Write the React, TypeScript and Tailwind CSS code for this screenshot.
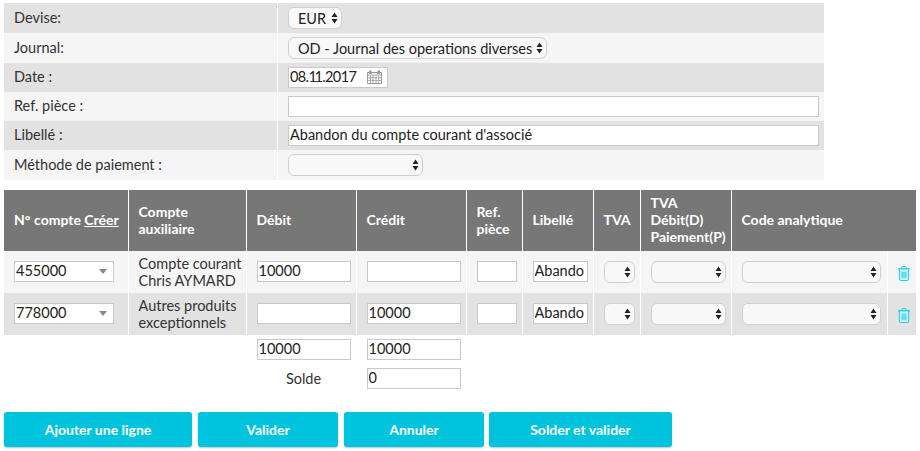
import React from 'react';

const inputBase = 'block h-[21px] border border-[#c9c9c9] bg-white pb-[2px] pl-[1px] text-[14.5px] leading-none text-[#222] outline-none';
const inputCls = `${inputBase} pr-[1px]`;

function Arrows() {
  return (
    <svg className="pointer-events-none absolute top-1/2 right-[4px] -translate-y-1/2" width="7" height="12" viewBox="0 0 7 12">
      <path d="M3.5 0.5L6.5 5H0.5Z M3.5 11.5L0.5 7H6.5Z" fill="#222" />
    </svg>
  );
}

function NativeSelect({ value, width, height = 'h-[22px]' }: { value?: string; width: string; height?: string }) {
  return (
    <div className={`relative ${width} ${height}`}>
      <select
        value={value ?? ''}
        onChange={() => {}}
        className={`block w-full ${height} appearance-none rounded-[6px] border border-[#cfcfcf] bg-[#f8f8f8] pb-[1px] pl-[9px] text-[14.5px] text-[#222] outline-none`}
      >
        <option value={value ?? ''}>{value ?? ''}</option>
      </select>
      <Arrows />
    </div>
  );
}

function AccountSelect({ value }: { value: string }) {
  return (
    <div className="relative h-[21px] w-[100px]">
      <input value={value} readOnly className={`${inputCls} w-full`} />
      <svg className="absolute top-[8px] right-[7px]" width="8" height="5" viewBox="0 0 8 5">
        <path d="M0 0H8L4 5Z" fill="#888" />
      </svg>
    </div>
  );
}

function TrashIcon() {
  return (
    <svg className="mt-[2px] ml-[9px]" width="14" height="15" viewBox="0 0 14 16" fill="none" stroke="#12cbe2" strokeWidth="1">
      <path d="M0.5 3H13.5 M4.5 3V1.5C4.5 0.9 5 0.5 5.5 0.5H8.5C9 0.5 9.5 0.9 9.5 1.5V3" />
      <path d="M2 3V14C2 14.9 2.6 15.5 3.5 15.5H10.5C11.4 15.5 12 14.9 12 14V3Z" fill="#c9f1f6" />
      <path d="M5 6V13 M7 6V13 M9 6V13" />
    </svg>
  );
}

function CalendarIcon() {
  return (
    <svg width="15" height="14" viewBox="0 0 15 14" fill="none" stroke="#999999" strokeWidth="1">
      <path d="M0.5 2.5H14.5V13.5H0.5Z" />
      <path d="M0.5 5H14.5 M0.5 7.8H14.5 M0.5 10.6H14.5 M3.5 5V13.5 M6 5V13.5 M9 5V13.5 M11.7 5V13.5" strokeWidth="0.8" />
      <path d="M2 0.5H4.5V4H2Z M10.5 0.5H13V4H10.5Z" fill="#999999" stroke="none" />
    </svg>
  );
}

function FormRow({ label, height, shade, children }: { label: string; height: string; shade: string; children: React.ReactNode }) {
  return (
    <div className={`grid grid-cols-[274px_1fr] ${height} ${shade}`}>
      <div className="flex items-center border-r border-white pb-[1px] pl-[10px]">{label}</div>
      <div className="flex items-center pl-[10px]">{children}</div>
    </div>
  );
}

function Header({ children, className = '' }: { children: React.ReactNode; className?: string }) {
  return <th className={`border-r border-white pb-[2px] pl-[10px] text-left align-middle text-[14px] leading-[17px] font-bold text-white ${className}`}>{children}</th>;
}

function Row({ shade, account, label, debit, credit }: { shade: string; account: string; label: React.ReactNode; debit: string; credit: string }) {
  const cell = 'border-r border-white pb-[1px] pl-[10px] align-middle';
  return (
    <tr className={`h-[42px] ${shade}`}>
      <td className={cell}><AccountSelect value={account} /></td>
      <td className={`${cell} leading-[17px] whitespace-nowrap`}>{label}</td>
      <td className={cell}><input value={debit} readOnly className={`${inputCls} w-[94px]`} /></td>
      <td className={cell}><input value={credit} readOnly className={`${inputCls} w-[94px]`} /></td>
      <td className={cell}><input readOnly className={`${inputCls} w-[40px]`} /></td>
      <td className={cell}><input value="Abandon du compte courant d'associé" readOnly className={`${inputBase} w-[55px] pr-[3px]`} /></td>
      <td className={cell}><NativeSelect width="w-[31px]" /></td>
      <td className={cell}><NativeSelect width="w-[75px]" /></td>
      <td className={cell}><NativeSelect width="w-[139px]" /></td>
      <td className="align-middle"><TrashIcon /></td>
    </tr>
  );
}

export default function App() {
  const buttonCls = 'h-[35px] rounded-[3px] bg-[#00c4de] text-[14px] font-bold text-white shadow-[0_1px_2px_rgba(0,0,0,0.25)]';
  const totalCell = 'border-r border-transparent pl-[10px] align-middle';

  return (
    <div className="h-[451px] w-[920px] overflow-hidden bg-white pt-[3px] pl-[4px] font-['Lato',sans-serif] text-[14.5px] text-[#333]">
      <div className="w-[820px]">
        <FormRow label="Devise:" height="h-[30px]" shade="bg-[#e2e2e2]">
          <NativeSelect value="EUR" width="w-[54px]" />
        </FormRow>
        <FormRow label="Journal:" height="h-[30px]" shade="bg-[#f5f5f5]">
          <NativeSelect value="OD - Journal des operations diverses" width="w-[259px]" />
        </FormRow>
        <FormRow label="Date :" height="h-[29px]" shade="bg-[#e2e2e2]">
          <div className="flex h-[21px] w-[100px] items-center justify-between border border-[#c9c9c9] bg-white pr-[5px] pb-[1px] pl-[1px] text-[#222]">
            <span className="tracking-[-0.6px]">08.<span className="tracking-[-2.5px]">1</span>1.2017</span>
            <CalendarIcon />
          </div>
        </FormRow>
        <FormRow label="Ref. pièce :" height="h-[29px]" shade="bg-[#f5f5f5]">
          <input readOnly className={`${inputCls} w-[531px]`} />
        </FormRow>
        <FormRow label="Libellé :" height="h-[29px]" shade="bg-[#e2e2e2]">
          <input value="Abandon du compte courant d'associé" readOnly className={`${inputCls} w-[531px]`} />
        </FormRow>
        <FormRow label="Méthode de paiement :" height="h-[30px]" shade="bg-[#f5f5f5]">
          <NativeSelect width="w-[135px]" />
        </FormRow>
      </div>

      <table className="mt-[10px] w-[912px] table-fixed border-collapse">
        <colgroup>
          <col className="w-[124px]" />
          <col className="w-[118px]" />
          <col className="w-[110px]" />
          <col className="w-[110px]" />
          <col className="w-[56px]" />
          <col className="w-[71px]" />
          <col className="w-[47px]" />
          <col className="w-[91px]" />
          <col className="w-[156px]" />
          <col className="w-[29px]" />
        </colgroup>
        <thead>
          <tr className="h-[61px] bg-[#777777]">
            <Header>N° compte <span className="underline">Créer</span></Header>
            <Header>Compte<br />auxiliaire</Header>
            <Header>Débit</Header>
            <Header>Crédit</Header>
            <Header>Ref.<br />pièce</Header>
            <Header>Libellé</Header>
            <Header>TVA</Header>
            <Header className="pr-0">TVA<br />Débit(D)<br />Paiement(P)</Header>
            <th colSpan={2} className="pb-[2px] pl-[10px] text-left align-middle text-[14px] font-bold text-white">Code analytique</th>
          </tr>
        </thead>
        <tbody>
          <Row shade="bg-[#f5f5f5]" account="455000" label={<>Compte courant<br />Chris AYMARD</>} debit="10000" credit="" />
          <Row shade="bg-[#e2e2e2]" account="778000" label={<>Autres produits<br />exceptionnels</>} debit="" credit="10000" />
          <tr className="h-[29px]">
            <td colSpan={2} className="border-r border-transparent" />
            <td className={totalCell}><input value="10000" readOnly className={`${inputCls} w-[94px]`} /></td>
            <td className={totalCell}><input value="10000" readOnly className={`${inputCls} w-[94px]`} /></td>
            <td colSpan={6} />
          </tr>
          <tr className="h-[29px]">
            <td colSpan={2} className="border-r border-transparent" />
            <td className={totalCell}><div className="w-[94px] text-center">Solde</div></td>
            <td className={totalCell}><input value="0" readOnly className={`${inputCls} w-[94px]`} /></td>
            <td colSpan={6} />
          </tr>
        </tbody>
      </table>

      <div className="mt-[19px] flex gap-[6px]">
        <button className={`${buttonCls} w-[188px]`}>Ajouter une ligne</button>
        <button className={`${buttonCls} w-[140px]`}>Valider</button>
        <button className={`${buttonCls} w-[140px]`}>Annuler</button>
        <button className={`${buttonCls} -ml-px w-[183px]`}>Solder et valider</button>
      </div>
    </div>
  );
}
